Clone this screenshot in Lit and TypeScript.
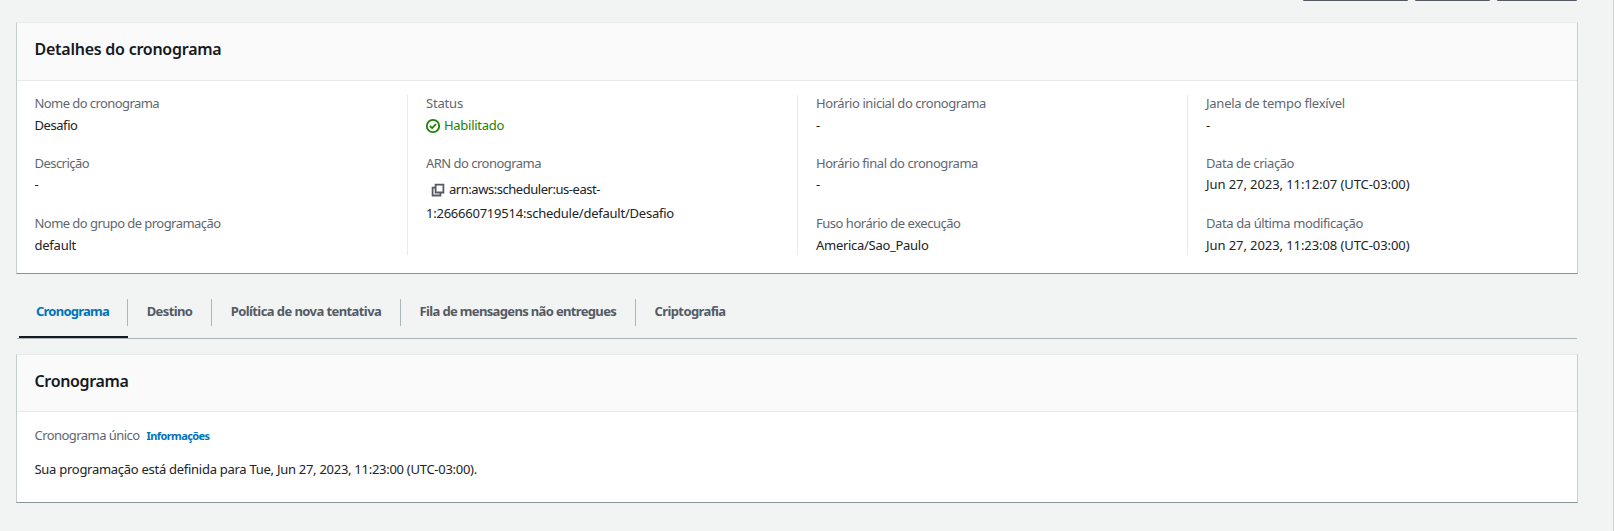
import { LitElement, html, css, svg } from "lit";
import { customElement, property, query } from "lit/decorators.js";

/* A run of text whose tracking is derived from the width it should occupy. */
@customElement("tracked-text")
class TrackedText extends LitElement {
  @property() text = "";
  @property({ type: Number }) width = 0;
  @query(".run") run!: HTMLElement;
  static styles = css`
    :host { display: inline-block; white-space: nowrap; }
    .run { display: inline-block; white-space: pre; }
  `;
  updated() {
    this.fit();
    document.fonts.ready.then(() => this.fit());
  }
  fit() {
    if (!this.width) return;
    this.run.style.letterSpacing = "0.001px";
    const natural = this.run.getBoundingClientRect().width;
    this.run.style.letterSpacing = `${(this.width - natural) / this.text.length}px`;
  }
  render() {
    return html`<span class="run">${this.text}</span>`;
  }
}

const t = (text: string, width = 0) => html`<tracked-text .text=${text} .width=${width}></tracked-text>`;

const checkIcon = svg`<svg class="check" viewBox="0 0 16 16" width="16" height="16" fill="none" stroke="currentColor" stroke-width="1.8"><circle cx="8" cy="8" r="6.2"/><path d="M4.9 8l2.2 2.1L11 6.2"/></svg>`;
const copyIcon = svg`<svg class="copy" viewBox="0 0 14 14" width="14" height="14" fill="none" stroke="currentColor" stroke-width="1.8"><path d="M4.6 1.7h7.8v7.8H4.6z"/><path d="M4.6 4.7H1.6v7.8h7.8V9.5"/></svg>`;

type Field = { label: string; lw: number; value: unknown };
const columns: Field[][] = [
  [
    { label: "Nome do cronograma", lw: 124.5, value: t("Desafio", 43) },
    { label: "Descrição", lw: 54.5, value: t("-", 5) },
    { label: "Nome do grupo de programação", lw: 186, value: t("default", 41.5) },
  ],
  [
    { label: "Status", lw: 37, value: html`<span class="ok">${checkIcon}${t("Habilitado", 60)}</span>` },
    {
      label: "ARN do cronograma",
      lw: 115,
      value: html`<div class="arn"><div class="arn-line">${copyIcon}${t("arn:aws:scheduler:us-east-", 151)}</div>
        <div class="arn-line">${t("1:266660719514:schedule/default/Desafio", 248)}</div></div>`,
    },
  ],
  [
    { label: "Horário inicial do cronograma", lw: 170, value: t("-", 5) },
    { label: "Horário final do cronograma", lw: 162, value: t("-", 5) },
    { label: "Fuso horário de execução", lw: 144.5, value: t("America/Sao_Paulo", 112.5) },
  ],
  [
    { label: "Janela de tempo flexível", lw: 139, value: t("-", 5) },
    { label: "Data de criação", lw: 88, value: t("Jun 27, 2023, 11:12:07 (UTC-03:00)", 203.5) },
    { label: "Data da última modificação", lw: 157, value: t("Jun 27, 2023, 11:23:08 (UTC-03:00)", 203.5) },
  ],
];

const tabs: [string, number][] = [
  ["Cronograma", 73],
  ["Destino", 45.6],
  ["Política de nova tentativa", 150.6],
  ["Fila de mensagens não entregues", 196.6],
  ["Criptografia", 71],
];

@customElement("app-root")
class AppRoot extends LitElement {
  static styles = css`
    * { box-sizing: border-box; }
    :host {
      display: block; height: 531px; overflow: hidden; background: #f2f3f3;
      border-right: 1px solid #ccd1d1; color: #202328; padding: 0 36px 0 16px;
      font: 13px/22px "Noto Sans", "Open Sans", sans-serif;
    }
    .actions { display: flex; justify-content: flex-end; gap: 7px; height: 22px; }
    .actions i { height: 1px; background: #545b64; border-radius: 0 0 2px 2px; }
    .a { width: 105px; } .b { width: 75px; } .c { width: 80px; }
    .card {
      background: #fff; border: 1px solid #c9cfcf; border-top-color: #e6eaea;
      border-bottom-color: #879596; margin-right: -1px;
    }
    .head {
      background: #fafafa; border-bottom: 1px solid #e6ebea; padding: 14px 18px 0 17.5px;
      font-size: 16px; font-weight: 600; line-height: 24px; margin: 0; color: #16191f;
    }
    .first .head { height: 58px; }
    .first { height: 252px; }
    .grid { display: grid; grid-template-columns: 390px 390px 390px 1fr; padding-top: 14px; }
    .col { height: 160px; padding-left: 18px; border-left: 1px solid #e6ebeb; }
    .col:first-child { border-left-color: transparent; padding-left: 16.5px; }
    .field { height: 60px; }
    .field:nth-child(3) { height: 40px; }
    .label { color: #5f6771; line-height: 16px; height: 18px; }
    .value { height: 24px; line-height: 24px; }
    .field:nth-child(2) .label { height: 17px; }
    .ok { display: flex; align-items: center; color: #1d8102; }
    .check { margin: 1px 3px 0 -1px; }
    .arn { padding-top: 5px; }
    .arn-line { display: flex; align-items: center; height: 24px; }
    .copy { margin: 2px 4px 0 5px; color: #545b64; }
    .tabs { display: flex; margin: 25px 0 0 1px; height: 40px; border-bottom: 1px solid #aab7b8; padding-left: 2px; color: #545b64; font-weight: 700; }
    .tab { height: 40px; display: flex; flex: none; }
    .lbl { height: 27px; line-height: 24px; padding: 0 18.7px; border-right: 1px solid #aab7b8; }
    .tab:last-child .lbl { border: 0; }
    .tab:first-child .lbl { padding: 0 18px 0 17px; }
    .tab:first-child { color: #0073bb; border-bottom: 2px solid #16191f; height: 39px; }
    .second { margin-top: 15px; height: 149px; }
    .second .head { height: 57px; }
    .body { padding: 12px 17.5px; }
    .line { display: flex; align-items: baseline; gap: 7px; color: #5f6771; height: 34px; }
    .info { color: #0073bb; font-size: 11px; font-weight: 700; }
  `;
  render() {
    return html`
      <div class="actions"><i class="a"></i><i class="b"></i><i class="c"></i></div>
      <section class="card first">
        <h2 class="head">${t("Detalhes do cronograma", 187)}</h2>
        <div class="grid">
          ${columns.map((c) => html`<div class="col">${c.map((f) => html`<div class="field">
            <div class="label">${t(f.label, f.lw)}</div><div class="value">${f.value}</div></div>`)}</div>`)}
        </div>
      </section>
      <nav class="tabs">${tabs.map(([n, w]) => html`<div class="tab"><span class="lbl">${t(n, w)}</span></div>`)}</nav>
      <section class="card second">
        <h2 class="head">${t("Cronograma", 94)}</h2>
        <div class="body">
          <div class="line">${t("Cronograma único", 105)}<span class="info">${t("Informações", 63)}</span></div>
          <div>${t("Sua programação está definida para Tue, Jun 27, 2023, 11:23:00 (UTC-03:00).", 442.5)}</div>
        </div>
      </section>`;
  }
}
